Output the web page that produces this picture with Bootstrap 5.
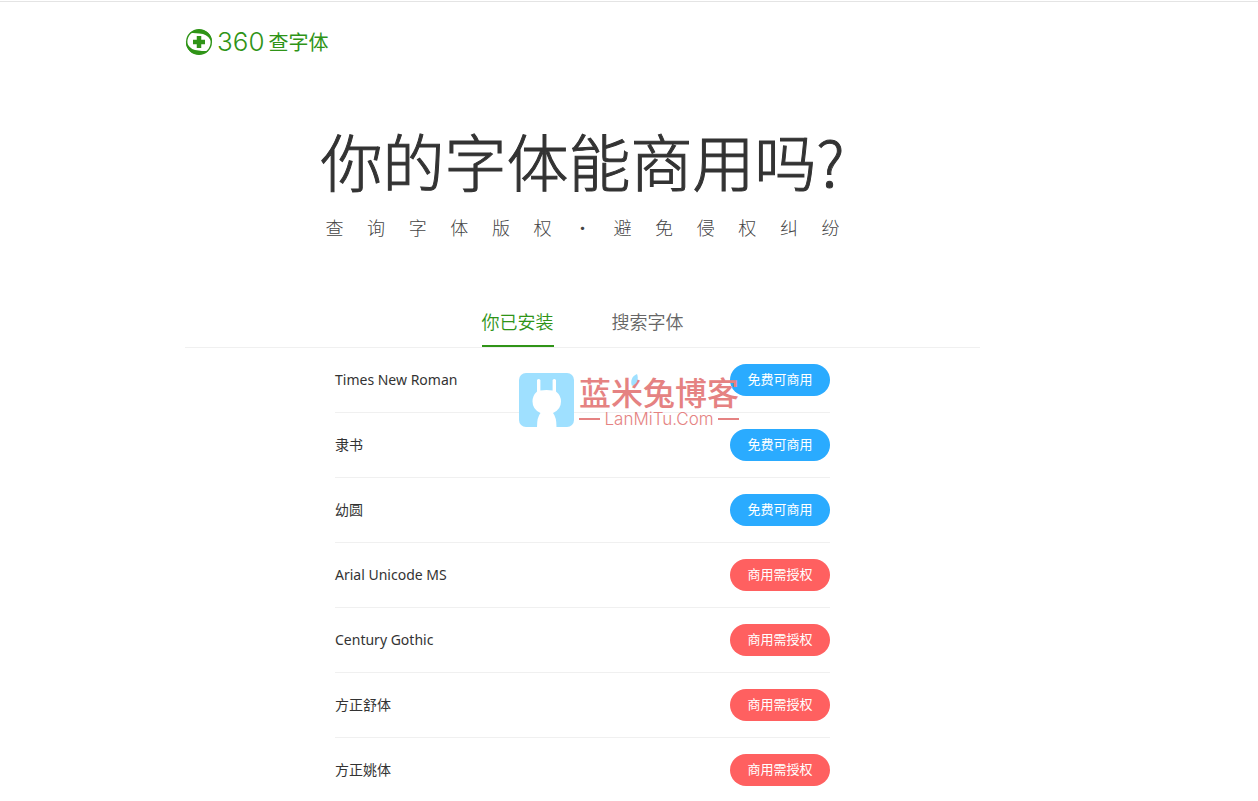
<!DOCTYPE html>
<html lang="zh-CN">
<head>
<meta charset="utf-8">
<meta name="viewport" content="width=device-width, initial-scale=1">
<title>360查字体</title>
<link href="https://cdn.jsdelivr.net/npm/bootstrap@5.3.0/dist/css/bootstrap.min.css" rel="stylesheet">
<style>
  body { font-family: "Noto Sans", "Noto Sans CJK SC", sans-serif; color: #333; border-top: 1px solid #e4e4e4; margin-top: 1px; }
  .page-shell { padding-right: 93px; }
  .page-inner { max-width: 795px; }
  .brand { color: #2f9417; height: 80px; }
  .brand-digits { font: 300 26px/30px Inter, sans-serif; }
  .brand-name { font: 400 20px/30px "Noto Sans CJK SC", sans-serif; }
  .hero { padding-top: 32px; }
  .hero-title { font: 300 62px/92px "Noto Sans CJK SC", sans-serif; width: 524px; white-space: nowrap; -webkit-text-stroke: 1px #333; }
  .hero-sub { font: 300 18px/28px "Noto Sans CJK SC", sans-serif; color: #444; width: 514px; margin-top: 7px; }
  .hero-phrase { width: 226px; text-align-last: justify; }
  .tabs { gap: 58px; padding-top: 68px; border-bottom: 1px solid #f0f0f0; }
  .tab-link { font: 350 18px/24px "Noto Sans CJK SC", sans-serif; color: #666; height: 38px; border-bottom: 2px solid transparent; }
  .tab-link.active { color: #2f9417; border-color: #2f9417; }
  .font-list { max-width: 495px; }
  .font-row { font-size: 14px; line-height: 32px; padding: 16px 0; border-bottom: 1px solid #f0f0f0; }
  .font-row:last-child { border-bottom: 0; padding-bottom: 14px; }
  .license { width: 100px; height: 32px; font: 400 13px/30px "Noto Sans CJK SC", sans-serif; color: #fff; }
  .license-free { background: #2aabff; }
  .license-paid { background: #ff6060; }
  .watermark { top: 24px; left: 184px; color: #e58282; pointer-events: none; }
  .mark-name { font: 500 32px/38px "Noto Sans CJK SC", sans-serif; white-space: nowrap; }
  .mark-site { font: 300 17px/18px Inter, sans-serif; }
  .mark-site::before, .mark-site::after { content: ""; flex: 1; height: 2px; background: currentColor; }
  .mark-leaf { top: 2px; left: 111px; }
</style>
</head>
<body>
<div class="page-shell">
  <div class="page-inner mx-auto">
    <header>
      <a href="#" class="brand d-flex align-items-center text-decoration-none">
        <svg width="28" height="28" viewBox="0 0 28 28" class="me-1" aria-hidden="true">
          <circle cx="14" cy="14" r="12.3" fill="none" stroke="currentColor" stroke-width="1.4"/>
          <path d="M5 5C14-2 28 3 27 15C25 10 22 7 18 6C13 5 9 5 5 5ZM23 23C14 30 0 25 1 13C3 18 6 21 10 22C15 23 19 23 23 23Z" fill="currentColor"/>
          <path d="M14 8v12M8 14h12" stroke="currentColor" stroke-width="4.5"/>
        </svg>
        <span class="brand-digits me-1">360</span><span class="brand-name">查字体</span>
      </a>
    </header>
    <main>
      <section class="hero d-flex flex-column align-items-center">
        <h1 class="hero-title mb-0">你的字体能商用吗?</h1>
        <p class="hero-sub mb-0 d-flex justify-content-between"><span class="hero-phrase">查 询 字 体 版 权</span><span>·</span><span class="hero-phrase">避 免 侵 权 纠 纷</span></p>
      </section>
      <nav class="tabs d-flex justify-content-center">
        <a href="#installed" class="tab-link active text-decoration-none">你已安装</a>
        <a href="#search" class="tab-link text-decoration-none">搜索字体</a>
      </nav>
      <div class="font-list mx-auto position-relative" id="installed">
        <ul class="list-unstyled mb-0">
          <li class="font-row d-flex justify-content-between"><span>Times New Roman</span><span class="license license-free rounded-pill text-center">免费可商用</span></li>
          <li class="font-row d-flex justify-content-between"><span>隶书</span><span class="license license-free rounded-pill text-center">免费可商用</span></li>
          <li class="font-row d-flex justify-content-between"><span>幼圆</span><span class="license license-free rounded-pill text-center">免费可商用</span></li>
          <li class="font-row d-flex justify-content-between"><span>Arial Unicode MS</span><span class="license license-paid rounded-pill text-center">商用需授权</span></li>
          <li class="font-row d-flex justify-content-between"><span>Century Gothic</span><span class="license license-paid rounded-pill text-center">商用需授权</span></li>
          <li class="font-row d-flex justify-content-between"><span>方正舒体</span><span class="license license-paid rounded-pill text-center">商用需授权</span></li>
          <li class="font-row d-flex justify-content-between"><span>方正姚体</span><span class="license license-paid rounded-pill text-center">商用需授权</span></li>
        </ul>
        <div class="watermark position-absolute d-flex">
          <svg width="56" height="56" viewBox="0 0 56 56" class="me-1" aria-hidden="true">
            <rect x="0" y="1" width="55" height="54" rx="7" fill="#9fe0ff"/>
            <path d="M18 8q1.700-2 3.400 0v10.500q6-1 12.200 0V8q1.700-2 3.400 0v11.500q5 4 5 10q0 8-8 11.500q3.500 4 3.500 14H18q0-10 3.500-14q-8-3.500-8-11.500q0-6 4.500-10Z" fill="#fff"/>
          </svg>
          <div>
            <div class="mark-name">蓝米兔博客</div>
            <div class="mark-site d-flex align-items-center gap-1">LanMiTu.Com</div>
          </div>
          <svg class="mark-leaf position-absolute" width="9" height="13" viewBox="0 0 9 13" aria-hidden="true">
            <path d="M7 0C9 5 7 10 2 12C0 7 2 2 7 0Z" fill="#9fe0ff"/>
          </svg>
        </div>
      </div>
    </main>
  </div>
</div>
<script src="https://cdn.jsdelivr.net/npm/bootstrap@5.3.0/dist/js/bootstrap.bundle.min.js"></script>
</body>
</html>
